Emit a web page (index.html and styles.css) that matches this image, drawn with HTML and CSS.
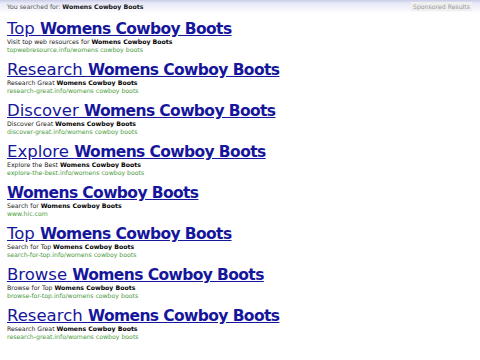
FILE: index.html
```html
<!DOCTYPE html>
<html>
<head>
<meta charset="utf-8">
<link rel="stylesheet" href="styles.css">
</head>
<body>
<div class="topbar">
  <div class="searched">You searched for: <b>Womens Cowboy Boots</b></div>
  <div class="sponsored">Sponsored Results</div>
</div>
<div class="results">
  <div class="ad">
    <a class="title" href="#">Top <b>Womens Cowboy Boots</b></a>
    <div class="desc">Visit top web resources for <b>Womens Cowboy Boots</b></div>
    <div class="url">topwebresource.info/womens cowboy boots</div>
  </div>
  <div class="ad">
    <a class="title" href="#">Research <b>Womens Cowboy Boots</b></a>
    <div class="desc">Research Great <b>Womens Cowboy Boots</b></div>
    <div class="url">research-great.info/womens cowboy boots</div>
  </div>
  <div class="ad">
    <a class="title" href="#">Discover <b>Womens Cowboy Boots</b></a>
    <div class="desc">Discover Great <b>Womens Cowboy Boots</b></div>
    <div class="url">discover-great.info/womens cowboy boots</div>
  </div>
  <div class="ad">
    <a class="title" href="#">Explore <b>Womens Cowboy Boots</b></a>
    <div class="desc">Explore the Best <b>Womens Cowboy Boots</b></div>
    <div class="url">explore-the-best.info/womens cowboy boots</div>
  </div>
  <div class="ad">
    <a class="title" href="#"><b>Womens Cowboy Boots</b></a>
    <div class="desc">Search for <b>Womens Cowboy Boots</b></div>
    <div class="url">www.hic.com</div>
  </div>
  <div class="ad">
    <a class="title" href="#">Top <b>Womens Cowboy Boots</b></a>
    <div class="desc">Search for Top <b>Womens Cowboy Boots</b></div>
    <div class="url">search-for-top.info/womens cowboy boots</div>
  </div>
  <div class="ad">
    <a class="title" href="#">Browse <b>Womens Cowboy Boots</b></a>
    <div class="desc">Browse for Top <b>Womens Cowboy Boots</b></div>
    <div class="url">browse-for-top.info/womens cowboy boots</div>
  </div>
  <div class="ad">
    <a class="title" href="#">Research <b>Womens Cowboy Boots</b></a>
    <div class="desc">Research Great <b>Womens Cowboy Boots</b></div>
    <div class="url">research-great.info/womens cowboy boots</div>
  </div>
</div>
</body>
</html>
```

FILE: styles.css
```css
html, body {
  margin: 0;
  padding: 0;
  background: #ffffff;
  font-family: "DejaVu Sans", Verdana, sans-serif;
}
.topbar {
  display: flex;
  justify-content: space-between;
  align-items: center;
  height: 13px;
  padding: 0 8px 0 7px;
  background: linear-gradient(to bottom, #c9cbe6 0px, #e6e8f6 3px, #f4f5fb 9px, #ffffff 13px);
  font-size: 6.2px;
  color: #555;
}
.searched b {
  color: #111;
}
.sponsored {
  color: #999;
  background: #efefef;
  padding: 1px 2px;
}
.results {
  display: flex;
  flex-direction: column;
  gap: 6px;
  padding: 6px 7px 0 7px;
}
.ad {
  display: flex;
  flex-direction: column;
}
.title {
  font-size: 16.5px;
  line-height: 19px;
  color: #16169c;
  text-decoration: underline;
  align-self: flex-start;
}
.title b {
  font-weight: bold;
  font-size: 15.5px;
  line-height: 1;
  letter-spacing: -0.6px;
}
.desc {
  font-size: 6.2px;
  line-height: 8px;
  color: #222;
}
.desc b {
  color: #000;
}
.url {
  font-size: 6.2px;
  line-height: 8px;
  color: #4a9a3c;
}
```
